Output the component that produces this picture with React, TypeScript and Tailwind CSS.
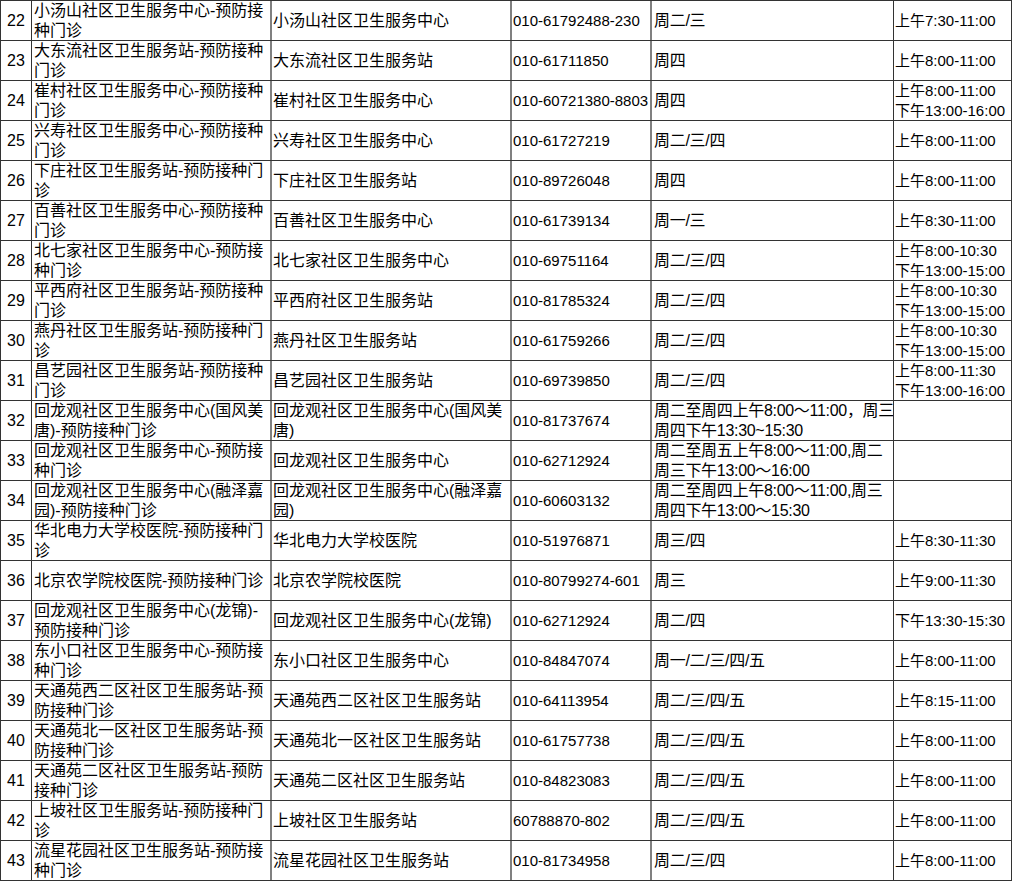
// 接种门诊列表（截图复刻）· 一行 = 一个门诊，行高固定 40px
type Clinic = {
  no: number;
  name: string[];
  short: string[];
  phone: string;
  days: string[];
  time: string[];
};

const CLINICS: Clinic[] = [
  { no: 22, name: ["小汤山社区卫生服务中心-预防接", "种门诊"], short: ["小汤山社区卫生服务中心"], phone: "010-61792488-230", days: ["周二/三"], time: ["上午7:30-11:00"] },
  { no: 23, name: ["大东流社区卫生服务站-预防接种", "门诊"], short: ["大东流社区卫生服务站"], phone: "010-61711850", days: ["周四"], time: ["上午8:00-11:00"] },
  { no: 24, name: ["崔村社区卫生服务中心-预防接种", "门诊"], short: ["崔村社区卫生服务中心"], phone: "010-60721380-8803", days: ["周四"], time: ["上午8:00-11:00", "下午13:00-16:00"] },
  { no: 25, name: ["兴寿社区卫生服务中心-预防接种", "门诊"], short: ["兴寿社区卫生服务中心"], phone: "010-61727219", days: ["周二/三/四"], time: ["上午8:00-11:00"] },
  { no: 26, name: ["下庄社区卫生服务站-预防接种门", "诊"], short: ["下庄社区卫生服务站"], phone: "010-89726048", days: ["周四"], time: ["上午8:00-11:00"] },
  { no: 27, name: ["百善社区卫生服务中心-预防接种", "门诊"], short: ["百善社区卫生服务中心"], phone: "010-61739134", days: ["周一/三"], time: ["上午8:30-11:00"] },
  { no: 28, name: ["北七家社区卫生服务中心-预防接", "种门诊"], short: ["北七家社区卫生服务中心"], phone: "010-69751164", days: ["周二/三/四"], time: ["上午8:00-10:30", "下午13:00-15:00"] },
  { no: 29, name: ["平西府社区卫生服务站-预防接种", "门诊"], short: ["平西府社区卫生服务站"], phone: "010-81785324", days: ["周二/三/四"], time: ["上午8:00-10:30", "下午13:00-15:00"] },
  { no: 30, name: ["燕丹社区卫生服务站-预防接种门", "诊"], short: ["燕丹社区卫生服务站"], phone: "010-61759266", days: ["周二/三/四"], time: ["上午8:00-10:30", "下午13:00-15:00"] },
  { no: 31, name: ["昌艺园社区卫生服务站-预防接种", "门诊"], short: ["昌艺园社区卫生服务站"], phone: "010-69739850", days: ["周二/三/四"], time: ["上午8:00-11:30", "下午13:00-16:00"] },
  { no: 32, name: ["回龙观社区卫生服务中心(国风美", "唐)-预防接种门诊"], short: ["回龙观社区卫生服务中心(国风美", "唐)"], phone: "010-81737674", days: ["周二至周四上午8:00～11:00，周三", "周四下午13:30~15:30"], time: [] },
  { no: 33, name: ["回龙观社区卫生服务中心-预防接", "种门诊"], short: ["回龙观社区卫生服务中心"], phone: "010-62712924", days: ["周二至周五上午8:00～11:00,周二", "周三下午13:00～16:00"], time: [] },
  { no: 34, name: ["回龙观社区卫生服务中心(融泽嘉", "园)-预防接种门诊"], short: ["回龙观社区卫生服务中心(融泽嘉", "园)"], phone: "010-60603132", days: ["周二至周四上午8:00～11:00,周三", "周四下午13:00～15:30"], time: [] },
  { no: 35, name: ["华北电力大学校医院-预防接种门", "诊"], short: ["华北电力大学校医院"], phone: "010-51976871", days: ["周三/四"], time: ["上午8:30-11:30"] },
  { no: 36, name: ["北京农学院校医院-预防接种门诊"], short: ["北京农学院校医院"], phone: "010-80799274-601", days: ["周三"], time: ["上午9:00-11:30"] },
  { no: 37, name: ["回龙观社区卫生服务中心(龙锦)-", "预防接种门诊"], short: ["回龙观社区卫生服务中心(龙锦)"], phone: "010-62712924", days: ["周二/四"], time: ["下午13:30-15:30"] },
  { no: 38, name: ["东小口社区卫生服务中心-预防接", "种门诊"], short: ["东小口社区卫生服务中心"], phone: "010-84847074", days: ["周一/二/三/四/五"], time: ["上午8:00-11:00"] },
  { no: 39, name: ["天通苑西二区社区卫生服务站-预", "防接种门诊"], short: ["天通苑西二区社区卫生服务站"], phone: "010-64113954", days: ["周二/三/四/五"], time: ["上午8:15-11:00"] },
  { no: 40, name: ["天通苑北一区社区卫生服务站-预", "防接种门诊"], short: ["天通苑北一区社区卫生服务站"], phone: "010-61757738", days: ["周二/三/四/五"], time: ["上午8:00-11:00"] },
  { no: 41, name: ["天通苑二区社区卫生服务站-预防", "接种门诊"], short: ["天通苑二区社区卫生服务站"], phone: "010-84823083", days: ["周二/三/四/五"], time: ["上午8:00-11:00"] },
  { no: 42, name: ["上坡社区卫生服务站-预防接种门", "诊"], short: ["上坡社区卫生服务站"], phone: "60788870-802", days: ["周二/三/四/五"], time: ["上午8:00-11:00"] },
  { no: 43, name: ["流星花园社区卫生服务站-预防接", "种门诊"], short: ["流星花园社区卫生服务站"], phone: "010-81734958", days: ["周二/三/四"], time: ["上午8:00-11:00"] },
];

function Lines({ lines }: { lines: string[] }) {
  return (
    <>
      {lines.map((l, i) => (
        <span key={i} className="block whitespace-nowrap">
          {l}
        </span>
      ))}
    </>
  );
}

const CELL = "flex flex-col justify-center overflow-hidden leading-[20px]";

export default function App() {
  return (
    <div className="min-h-screen bg-white font-['Liberation_Sans','Noto_Sans_CJK_SC',sans-serif] text-[16px] text-black">
      <div className="w-[1012px] border-b border-[#333]">
        {CLINICS.map((c) => (
          <div
            key={c.no}
            className="grid h-[40px] grid-cols-[31px_239px_240px_140px_243px_119px] border-t border-[#333]"
          >
            <div className={`${CELL} items-center border-l border-[#333]`}>{c.no}</div>
            <div className={`${CELL} border-l border-[#333] pl-[2px]`}>
              <Lines lines={c.name} />
            </div>
            <div className={`${CELL} border-l-2 border-[#808080] pl-px`}>
              <Lines lines={c.short} />
            </div>
            <div className={`${CELL} border-l-2 border-[#808080] pl-px text-[15px]`}>{c.phone}</div>
            <div className={`${CELL} border-l-2 border-[#808080] pl-[2px] tracking-[-0.3px]`}>
              <Lines lines={c.days} />
            </div>
            <div className={`${CELL} border-x border-[#333] pl-px text-[15px]`}>
              <Lines lines={c.time} />
            </div>
          </div>
        ))}
      </div>
    </div>
  );
}
